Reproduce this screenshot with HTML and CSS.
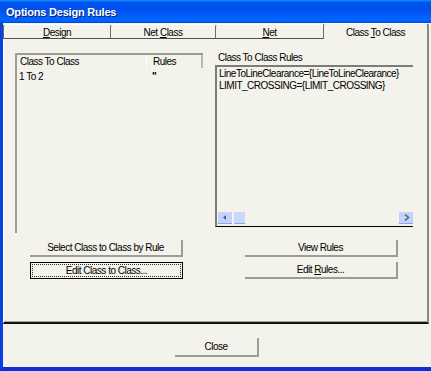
FILE: index.html
```html
<!DOCTYPE html>
<html>
<head>
<meta charset="utf-8">
<link rel="stylesheet" href="styles.css">
</head>
<body>
<div class="window">
  <div class="titlebar"><span class="title">Options Design Rules</span></div>
  <div class="client">
    <div class="tabs">
      <div class="tab t1"><span><u>D</u>esign</span></div>
      <div class="tab t2"><span>Net <u>C</u>lass</span></div>
      <div class="tab t3"><span><u>N</u>et</span></div>
      <div class="tab t4 active"><span>Class <u>T</u>o Class</span></div>
    </div>
    <div class="panel">
      <div class="top">
        <div class="listbox">
          <div class="lv-head">
            <div class="col c1">Class To Class</div>
            <div class="col c2">Rules</div>
          </div>
          <div class="lv-row">
            <div class="col c1">1 To 2</div>
            <div class="col c2">"</div>
          </div>
        </div>
        <div class="rules">
          <div class="label">Class To Class Rules</div>
          <div class="textbox">
            <div class="text">LineToLineClearance={LineToLineClearance}<br>LIMIT_CROSSING={LIMIT_CROSSING}</div>
            <div class="hscroll">
              <div class="sbtn"><svg width="13" height="11" viewBox="0 0 13 11"><path d="M7 3 L4 5.5 L7 8 Z" fill="#4d6185"/></svg></div>
              <div class="thumb"></div>
              <div class="track"></div>
              <div class="sbtn"><svg width="13" height="11" viewBox="0 0 13 11"><path d="M5 2.5 L8.5 5.5 L5 8.5" fill="none" stroke="#4d6185" stroke-width="1.6"/></svg></div>
            </div>
          </div>
        </div>
      </div>
      <div class="buttons">
        <button class="btn left"><span>Select Class to Class by Rule</span></button>
        <button class="btn right"><span>View Rules</span></button>
        <button class="btn left focus"><span class="focusring"><span>Edit Class to Class...</span></span></button>
        <button class="btn right"><span>Edit <u>R</u>ules...</span></button>
      </div>
    </div>
    <div class="footer">
      <button class="btn close"><span>Close</span></button>
    </div>
  </div>
</div>
</body>
</html>
```

FILE: styles.css
```css
* { box-sizing: border-box; }
html, body { margin: 0; padding: 0; }
body {
  width: 431px;
  height: 371px;
  overflow: hidden;
  background: #0831d9;
  font-family: "Liberation Sans", Arial, sans-serif;
  font-size: 10px;
  letter-spacing: -0.5px;
  color: #000;
}
.window {
  width: 431px;
  height: 371px;
  display: flex;
  flex-direction: column;
  border-left: 3px solid #0a3fe0;
  border-bottom: 4px solid #0831d9;
}
.titlebar {
  height: 23px;
  margin-left: -3px;
  padding-left: 6px;
  display: flex;
  align-items: center;
  background: linear-gradient(to bottom, #0997ff 0%, #0053ee 10%, #0050ee 40%, #0066ff 85%, #0060ff 93%, #003dd7 100%);
}
.title {
  font-family: "Liberation Sans", Arial, sans-serif;
  font-weight: bold;
  font-size: 11px;
  letter-spacing: -0.2px;
  color: #fff;
  text-shadow: 1px 1px 0 #0a1e7a;
}
.client {
  flex: 1;
  background: #f3f2eb;
  display: flex;
  flex-direction: column;
}
.tabs {
  display: flex;
  height: 16px;
  align-items: flex-end;
}
.tab {
  height: 15px;
  display: flex;
  align-items: center;
  justify-content: center;
  padding-top: 2px;
  border-top: 1px solid #ffffff;
  border-left: 1px solid #6c6c6c;
  border-bottom: 1px solid #505050;
  border-radius: 3px 3px 0 0;
  background: #f3f2eb;
  white-space: pre;
}
.t1 { width: 107px; }
.t2 { width: 105px; }
.t3 { width: 108px; }
.t4 { width: 106px; }
.tab.active {
  height: 16px;
  border-bottom: none;
  border-right: 2px solid #8a8a84;
  padding-top: 1px;
}
.panel {
  width: 426px;
  height: 285px;
  border-left: 1px solid #ffffff;
  border-right: 2px solid #8a8a84;
  border-bottom: 2px solid #111;
  box-shadow: inset 0 -1px 0 #a6a69e;
  padding: 14px 0 0 11px;
}
.top {
  display: flex;
  gap: 12px;
  height: 180px;
}
.listbox {
  width: 188px;
  height: 180px;
  border-left: 2px solid #9c9c96;
  border-top: 2px solid #9c9c96;
}
.lv-head {
  display: flex;
  height: 13px;
  align-items: center;
}
.lv-head .c1 {
  width: 130px;
  padding-left: 3px;
  border-right: 1px solid #fff;
  height: 13px;
  line-height: 13px;
}
.lv-head .c2 {
  width: 56px;
  padding-left: 6px;
  border-right: 2px solid #b8b8b0;
  height: 13px;
  line-height: 13px;
}
.lv-row {
  display: flex;
  height: 14px;
  align-items: center;
  margin-top: 1px;
}
.lv-row .c1 { width: 131px; padding-left: 2px; }
.lv-row .c2 { padding-left: 4px; font-weight: bold; }
.rules {
  width: 198px;
  display: flex;
  flex-direction: column;
}
.label {
  height: 12px;
  line-height: 10px;
  padding-left: 3px;
}
.textbox {
  height: 162px;
  border-top: 2px solid #7c7c78;
  border-left: 2px solid #7c7c78;
  border-bottom: 1px solid #000;
  display: flex;
  flex-direction: column;
  justify-content: space-between;
}
.text {
  padding: 1px 0 0 2px;
  line-height: 12px;
  white-space: nowrap;
  overflow: hidden;
}
.hscroll {
  display: flex;
  align-items: center;
  height: 14px;
  margin-bottom: 1px;
  padding-left: 1px;
}
.sbtn {
  width: 14px;
  height: 12px;
  background: #c3d3fd;
  border-bottom: 1px solid #8ea7e8;
  display: flex;
  align-items: center;
  justify-content: center;
}
.thumb {
  width: 11px;
  height: 12px;
  margin-left: 2px;
  background: #c9d8fc;
  border-bottom: 1px solid #8ea7e8;
}
.track { flex: 1; }
.buttons {
  display: grid;
  grid-template-columns: 200px 200px;
  row-gap: 5px;
  margin-top: 7px;
}
.btn {
  height: 17px;
  width: 153px;
  font-family: "Liberation Sans", Arial, sans-serif;
  font-size: 10px;
  letter-spacing: -0.5px;
  color: #000;
  background: #f3f2eb;
  border: none;
  border-right: 2px solid #9d9d94;
  border-bottom: 2px solid #9d9d94;
  padding: 0;
  margin: 0;
  display: flex;
  align-items: center;
  justify-content: center;
  white-space: pre;
}
.btn.left { margin-left: 15px; }
.btn.right { margin-left: 30px; }
.btn.focus {
  border: 1px solid #000;
  padding: 1px;
}
.focusring {
  width: 100%;
  height: 100%;
  border: 1px dotted #333;
  display: flex;
  align-items: center;
  justify-content: center;
}
.footer {
  display: flex;
  padding-top: 14px;
  padding-left: 172px;
}
.btn.close {
  width: 84px;
  height: 19px;
}
```
